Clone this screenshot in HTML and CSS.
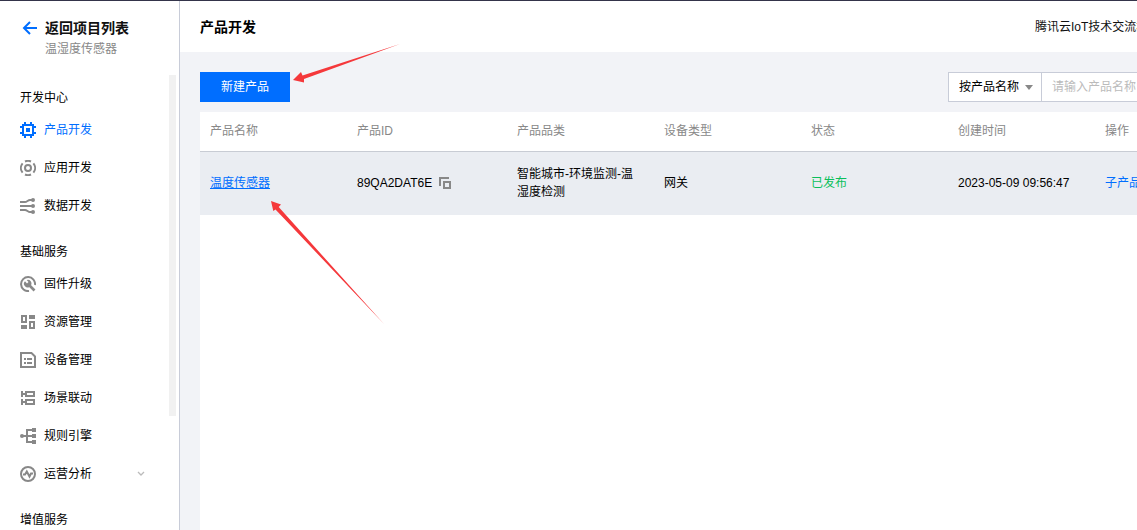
FILE: index.html
```html
<!DOCTYPE html>
<html lang="zh-CN">
<head>
  <meta charset="UTF-8">
  <meta name="viewport" content="width=device-width, initial-scale=1.0">
  <title>产品开发</title>
  <link rel="stylesheet" href="styles.css">
</head>
<body>
  <div class="layout">
    <aside class="sidebar">
      <div class="project">
        <a href="#" class="back">
          <svg width="16" height="16" viewBox="0 0 16 16" fill="none" stroke="#006eff" stroke-width="2"><path d="M8 2L2 8l6 6M2 8h13"/></svg>
          返回项目列表
        </a>
        <p class="project-name">温湿度传感器</p>
      </div>

      <div class="menu-wrap">
        <nav class="menu">
          <h2>开发中心</h2>
          <ul>
            <li><a href="#" class="active">
              <svg class="icon" viewBox="0 0 16 16" fill="none" stroke="currentColor" stroke-width="2"><path d="M3 3h10v10H3zM5 0v3M11 0v3M5 13v3M11 13v3M0 5h3M0 11h3M13 5h3M13 11h3"/><path d="M6 6h4v4H6z" fill="currentColor" stroke="none"/></svg>
              产品开发</a></li>
            <li><a href="#">
              <svg class="icon" viewBox="0 0 16 16" fill="none" stroke="currentColor" stroke-width="2"><circle cx="8" cy="8" r="3"/><path d="M5 1.5a7.1 7.1 0 0 1 6 0M5 14.5a7.1 7.1 0 0 0 6 0M2.6 3.4a7.1 7.1 0 0 0 0 9.2M13.4 3.4a7.1 7.1 0 0 1 0 9.2"/></svg>
              应用开发</a></li>
            <li><a href="#">
              <svg class="icon" viewBox="0 0 16 16" fill="none" stroke="currentColor" stroke-width="2"><path d="M0 4h5c2 0 3-2 5-2h4M0 8h14M0 12h5c2 0 3 2 5 2h4"/><g fill="currentColor" stroke="none"><circle cx="13" cy="2" r="2"/><circle cx="13" cy="8" r="2"/><circle cx="13" cy="14" r="2"/></g></svg>
              数据开发</a></li>
          </ul>

          <h2>基础服务</h2>
          <ul>
            <li><a href="#">
              <svg class="icon" viewBox="0 0 16 16" fill="none" stroke="currentColor" stroke-width="2"><path d="M9 15A7 7 0 1 1 15 9"/><path d="M9 9l5.5 5.5" stroke-width="2.6"/><path d="M5 5.2l2 2.2 1.5-1.4-1.8-1.9A3.6 3.6 0 0 1 11.2 9 3.6 3.6 0 0 1 5 10.2 3.6 3.6 0 0 1 5 5.2z" fill="currentColor" stroke="none"/></svg>
              固件升级</a></li>
            <li><a href="#">
              <svg class="icon" viewBox="0 0 16 16" fill="none" stroke="currentColor" stroke-width="2"><path d="M2 2h4v6H2zM10 8h4v6h-4z"/><path d="M1 11h6v4H1zM9 1h6v4H9z" fill="currentColor" stroke="none"/></svg>
              资源管理</a></li>
            <li><a href="#">
              <svg class="icon" viewBox="0 0 16 16" fill="none" stroke="currentColor" stroke-width="2"><path d="M1 1h10.5L15 4.5V15H1z"/><path d="M4 7h2M7 7h5M4 11h2M7 11h5"/></svg>
              设备管理</a></li>
            <li><a href="#">
              <svg class="icon" viewBox="0 0 16 16" fill="none" stroke="currentColor" stroke-width="2"><path d="M6 2h8v4H6zM6 10h8v4H6zM1 4h5M1 12h5M2 1v6M2 9v6"/></svg>
              场景联动</a></li>
            <li><a href="#">
              <svg class="icon" viewBox="0 0 16 16" fill="none" stroke="currentColor" stroke-width="2"><path d="M1 8h13M12 2H7v12h5"/><g fill="currentColor" stroke="none"><circle cx="2" cy="8" r="2"/><path d="M12 0h4v4h-4zM12 6h4v4h-4zM12 12h4v4h-4z"/></g></svg>
              规则引擎</a></li>
            <li><a href="#">
              <svg class="icon" viewBox="0 0 16 16" fill="none" stroke="currentColor" stroke-width="2"><circle cx="8" cy="8" r="7"/><path d="M3 8.5h2L6.800 5.500l2.700 5L11 7.500h2"/></svg>
              运营分析
              <svg class="chevron" width="8" height="6" viewBox="0 0 8 6" fill="none" stroke="#bbb" stroke-width="1.3"><path d="M1 1l3 3 3-3"/></svg></a></li>
          </ul>

          <h2>增值服务</h2>
        </nav>
        <div class="scroll-thumb"></div>
      </div>
    </aside>

    <main class="main">
      <header class="page-header">
        <h1>产品开发</h1>
        <div class="header-links"><a href="#">腾讯云IoT技术交流群</a></div>
      </header>

      <section class="content">
        <div class="toolbar">
          <button type="button" class="btn">新建产品</button>
          <form class="search">
            <div class="select-wrap">
              <select aria-label="搜索字段"><option>按产品名称</option></select>
            </div>
            <input type="text" aria-label="产品名称" placeholder="请输入产品名称">
          </form>
        </div>

        <table class="products">
          <colgroup>
            <col class="col"><col class="col-id"><col class="col"><col class="col"><col class="col"><col class="col"><col>
          </colgroup>
          <thead>
            <tr>
              <th>产品名称</th>
              <th>产品ID</th>
              <th>产品品类</th>
              <th>设备类型</th>
              <th>状态</th>
              <th>创建时间</th>
              <th>操作</th>
            </tr>
          </thead>
          <tbody>
            <tr>
              <td><a href="#" class="name">温度传感器</a></td>
              <td>
                <div class="product-id">
                  <span>89QA2DAT6E</span>
                  <button type="button" class="copy" aria-label="复制"><svg width="12" height="12" viewBox="0 0 12 12" fill="none" stroke="#888" stroke-width="2"><path d="M1 9V1h9M5 5h6v6H5z"/></svg></button>
                </div>
              </td>
              <td>智能城市-环境监测-温湿度检测</td>
              <td>网关</td>
              <td class="published">已发布</td>
              <td>2023-05-09 09:56:47</td>
              <td><a href="#">子产品</a></td>
            </tr>
          </tbody>
        </table>
      </section>
    </main>
  </div>

  <svg class="arrows" width="420" height="340" viewBox="0 0 420 340" fill="#f5383b" aria-hidden="true">
    <path d="M293 80L301 72l1.500 3.500L400 44 304 79l0 3.500z"/>
    <path d="M271 201l10 3.500-2.300 2.500L384 324 275.500 209.500l-2.200 1.500z"/>
  </svg>
</body>
</html>
```
FILE: styles.css
```css
* { box-sizing: border-box; }
html, body { margin: 0; padding: 0; height: 100%; overflow: hidden; }
body { font-family: "Liberation Sans", "Noto Sans CJK SC", sans-serif; font-size: 12px; line-height: 18px; color: #000; background: #fff; position: relative; }
h1, h2, p, ul { margin: 0; padding: 0; }
ul { list-style: none; }
a { color: #006eff; text-decoration: none; }
button, input, select { font: inherit; }

.layout { display: flex; height: 100%; border-top: 1px solid #34344a; }

/* sidebar */
.sidebar { flex: 0 0 180px; display: flex; flex-direction: column; border-right: 1px solid #c8ccd8; }
.project { height: 74px; padding: 18px 0 0 22px; flex-shrink: 0; }
.back { display: flex; align-items: center; gap: 7px; font-size: 14px; line-height: 18px; font-weight: bold; color: #111; }
.project-name { padding-left: 23px; line-height: 24px; color: #888; }

.menu-wrap { flex: 1; min-height: 0; display: flex; padding-right: 3px; }
.menu { flex: 1; padding: 10px 0 0 20px; overflow: hidden; }
.menu h2 { font-size: 12px; line-height: 26px; font-weight: normal; }
.menu ul { margin-bottom: 14px; }
.menu a { display: flex; align-items: center; gap: 8px; height: 38px; padding-right: 24px; color: #000; }
.menu a.active { color: #006eff; }
.icon { width: 16px; height: 16px; color: #888; }
.active .icon { color: #006eff; }
.chevron { margin-left: auto; }
.scroll-thumb { width: 7px; height: 75%; background: #f1f1f1; }

/* main area */
.main { flex: 1; min-width: 0; overflow: hidden; display: flex; flex-direction: column; background: #f2f3f7; }
.page-header { min-width: 1120px; height: 51px; padding: 0 20px; display: flex; align-items: center; justify-content: space-between; background: #fff; align-self: flex-start; }
.page-header h1 { font-size: 14px; }
.header-links { width: 245px; }
.header-links a { color: #111; }

.content { flex: 1; min-width: 1120px; padding: 20px 20px 0; display: flex; flex-direction: column; align-self: flex-start; }
.content::after { content: ""; flex: 1; background: #fff; }
.toolbar { display: flex; justify-content: space-between; margin-bottom: 10px; }
.btn { width: 90px; height: 30px; padding: 0; border: none; background: #006eff; color: #fff; cursor: pointer; }
.search { display: flex; }
.select-wrap { position: relative; width: 94px; height: 30px; }
.select-wrap::after { content: ""; position: absolute; right: 9px; top: 13px; border: 4px solid transparent; border-top: 5px solid #888; border-bottom: 0; pointer-events: none; }
.search select { appearance: none; width: 100%; height: 30px; padding: 0 10px; border: 1px solid #c8ccd8; border-radius: 0; background: #fff; color: #000; }
.search input { width: 238px; height: 30px; padding: 0 10px; border: 1px solid #c8ccd8; border-left: 0; border-radius: 0; background: #fff; }
.search input::placeholder { color: #bbb; }

.products { width: 100%; table-layout: fixed; border-collapse: collapse; background: #fff; }
.col { width: 147px; }
.col-id { width: 160px; }
.products th { height: 39px; padding: 0 10px; border-bottom: 1px solid #c8ccd4; text-align: left; font-weight: normal; color: #888; }
.products td { height: 64px; padding: 0 10px; background: #eaedf2; }
.name { text-decoration: underline; }
.product-id { display: flex; align-items: center; gap: 7px; }
.copy { display: flex; padding: 0; border: none; background: none; cursor: pointer; }
.products .published { color: #0abf5b; }

.arrows { position: absolute; left: 0; top: 0; pointer-events: none; }
```
